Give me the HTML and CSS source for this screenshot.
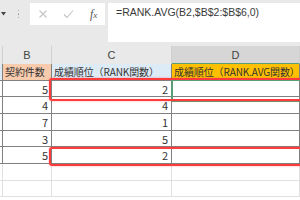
FILE: index.html
```html
<!DOCTYPE html>
<html lang="ja">
<head>
    <meta charset="UTF-8">
    <title>RANK.AVG</title>
    <link rel="stylesheet" href="styles.css">
</head>
<body>
    <div class="formula-bar">
        <div class="namebox-end">
            <svg width="5" height="4" viewBox="0 0 5 4"><path d="M0 0H5L2.5 3.5Z" fill="#444"/></svg>
        </div>
        <div class="grip"><span></span><span></span><span></span></div>
        <div class="fx-box">
            <svg class="btn" width="10" height="10" viewBox="0 0 10 10"><path d="M1.5 1.5L8.5 8.5M8.5 1.5L1.5 8.5" stroke="#c4c4c4" stroke-width="1.1" fill="none"/></svg>
            <svg class="btn" width="11" height="10" viewBox="0 0 11 10"><path d="M1 5.5L4 8.5L10 1.5" stroke="#c4c4c4" stroke-width="1.1" fill="none"/></svg>
            <span class="fx">f<small>x</small></span>
        </div>
        <div class="formula-input">=RANK.AVG(B2,$B$2:$B$6,0)</div>
    </div>

    <div class="sheet">
        <div class="grid">
            <div class="col-head"></div>
            <div class="col-head">B</div>
            <div class="col-head">C</div>
            <div class="col-head active">D</div>

            <div class="cell data fill-blue"></div>
            <div class="cell data fill-peach text">契約件数</div>
            <div class="cell data fill-blue text">成績順位（RANK関数）</div>
            <div class="cell data fill-gold text">成績順位（RANK.AVG関数）</div>

            <div class="cell data"></div><div class="cell data num">5</div><div class="cell data num">2</div><div class="cell data"></div>
            <div class="cell data"></div><div class="cell data num">4</div><div class="cell data num">4</div><div class="cell data"></div>
            <div class="cell data"></div><div class="cell data num">7</div><div class="cell data num">1</div><div class="cell data"></div>
            <div class="cell data"></div><div class="cell data num">3</div><div class="cell data num">5</div><div class="cell data"></div>
            <div class="cell data"></div><div class="cell data num">5</div><div class="cell data num">2</div><div class="cell data"></div>

            <div class="cell"></div><div class="cell"></div><div class="cell"></div><div class="cell"></div>
            <div class="cell"></div><div class="cell"></div><div class="cell"></div><div class="cell"></div>
        </div>

        <div class="selection"></div>
        <div class="mark mark-top"></div>
        <div class="mark mark-bottom"></div>
    </div>
</body>
</html>
```

FILE: styles.css
```css
body {
    margin: 0;
    width: 300px;
    height: 200px;
    overflow: hidden;
    background: #ffffff;
    font-family: 'Noto Sans CJK JP', 'Liberation Sans', sans-serif;
    color: #333;
}

.formula-bar {
    display: flex;
    align-items: flex-start;
    height: 46px;
    padding-top: 3px;
    box-sizing: border-box;
    background: #e9e9e9;
}

.namebox-end {
    width: 7px;
    height: 22px;
    display: flex;
    align-items: center;
    justify-content: center;
}

.grip {
    width: 23px;
    height: 22px;
    display: flex;
    flex-direction: column;
    align-items: center;
    justify-content: center;
    gap: 2px;
}

.grip span {
    width: 1.5px;
    height: 1.5px;
    background: #9a9a9a;
    border-radius: 50%;
}

.fx-box {
    width: 75px;
    height: 22px;
    background: #fff;
    display: flex;
    align-items: center;
    gap: 15px;
    padding-left: 8px;
    box-sizing: border-box;
}

.fx {
    font-family: 'Liberation Serif', serif;
    font-style: italic;
    font-size: 12px;
    color: #555;
    margin-left: 1px;
}

.fx small {
    font-size: 9px;
}

.formula-input {
    flex: 1;
    margin-left: 3px;
    height: 39px;
    background: #fff;
    padding: 3px 0 0 8px;
    box-sizing: border-box;
    font-family: 'Liberation Sans', sans-serif;
    font-size: 10.5px;
    color: #3a3a3a;
}

.sheet {
    position: relative;
}

.grid {
    display: grid;
    grid-template-columns: 3px 49px 120px 128px;
    grid-template-rows: 18px;
    grid-auto-rows: 16.67px;
}

.col-head {
    background: #e9e9e9;
    border-right: 1px solid #d0d0d0;
    font-family: 'Liberation Sans', sans-serif;
    font-size: 11px;
    color: #444;
    text-align: center;
    line-height: 18px;
}

.col-head.active {
    background: #d6d6d6;
    border-bottom: 1px solid #5b9e76;
}

.cell {
    border-right: 1px solid #e0e0e0;
    border-bottom: 1px solid #e0e0e0;
    box-sizing: border-box;
    font-size: 11px;
    line-height: 16px;
    white-space: nowrap;
    overflow: hidden;
}

.cell.data {
    border-right-color: #808080;
    border-bottom-color: #808080;
}

.text {
    padding-left: 2px;
    font-size: 10px;
    letter-spacing: -0.1px;
}

.num {
    text-align: right;
    padding-right: 3px;
}

.fill-blue { background: #ddebf7; }
.fill-peach { background: #f8cbad; }
.fill-gold { background: #ffc000; }

.selection {
    position: absolute;
    left: 171px;
    top: 33px;
    width: 135px;
    height: 19px;
    border: 2px solid #5b9e76;
}

.mark {
    position: absolute;
    left: 49px;
    width: 260px;
    border: 2px solid #ff3b3b;
    border-radius: 3px;
    box-shadow: 0 0 2px rgba(255, 60, 60, 0.5);
}

.mark-top {
    top: 32px;
    height: 19px;
}

.mark-bottom {
    top: 101px;
    height: 15px;
}
```
